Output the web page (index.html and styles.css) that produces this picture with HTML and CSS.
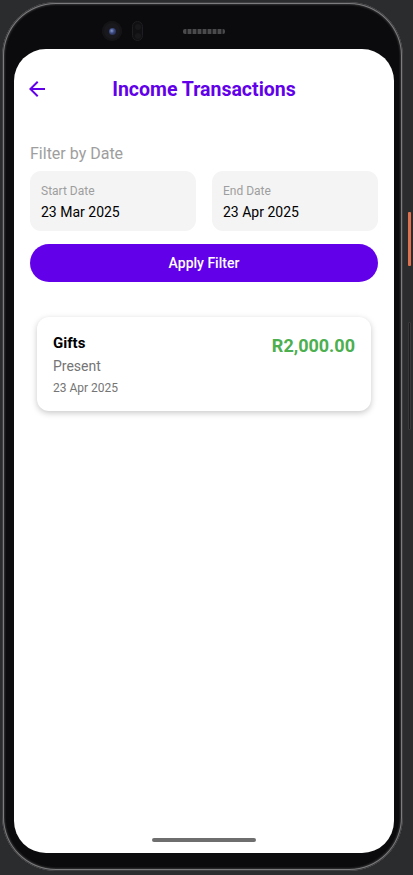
FILE: index.html
```html
<!DOCTYPE html>
<html lang="en">
<head>
<meta charset="utf-8">
<title>Income Transactions</title>
<link rel="stylesheet" href="styles.css">
</head>
<body>
<div class="phone">
  <span class="side-btn power"></span>
  <span class="side-btn volume"></span>
  <div class="bezel-top">
    <span class="camera"><span class="lens"></span></span>
    <span class="sensor"><span class="dot"></span><span class="dot"></span></span>
    <span class="speaker"></span>
  </div>
  <div class="screen">
    <header class="app-bar">
      <svg class="back" width="24" height="24" viewBox="0 0 24 24"><path d="M20 11H7.83l5.59-5.59L12 4l-8 8 8 8 1.41-1.41L7.83 13H20v-2z" fill="#6200ea"/></svg>
      <h1 class="title">Income Transactions</h1>
    </header>
    <main class="content">
      <div class="filter-label">Filter by Date</div>
      <div class="date-row">
        <div class="date-box">
          <div class="date-label">Start Date</div>
          <div class="date-value">23 Mar 2025</div>
        </div>
        <div class="date-box">
          <div class="date-label">End Date</div>
          <div class="date-value">23 Apr 2025</div>
        </div>
      </div>
      <button class="apply">Apply Filter</button>
      <div class="card">
        <div class="card-left">
          <div class="card-title">Gifts</div>
          <div class="card-sub">Present</div>
          <div class="card-date">23 Apr 2025</div>
        </div>
        <div class="amount">R2,000.00</div>
      </div>
    </main>
    <div class="home-indicator"></div>
  </div>
</div>
</body>
</html>
```

FILE: styles.css
```css
* { box-sizing: border-box; }
html, body { margin: 0; padding: 0; }
body {
  background: #2b2c2e;
  width: 413px;
  height: 875px;
  overflow: hidden;
  font-family: Roboto, "Noto Sans", sans-serif;
}
.phone {
  position: relative;
  margin: 2px 0 0 2px;
  width: 401px;
  height: 869px;
  border-radius: 54px;
  background: #0b0b0d;
  box-shadow: inset 0 0 0 1px #3e3e40, inset 0 0 0 2px #7c7c7e, inset 0 0 0 3px #262628, inset 0 0 0 4px #151517;
  padding: 0 9px 18px 12px;
  display: flex;
  flex-direction: column;
}
.side-btn {
  position: absolute;
  left: 406px;
  width: 3px;
  border-radius: 1px;
}
.side-btn.power { top: 210px; height: 54px; background: #e0714f; }
.side-btn.volume { top: 320px; height: 108px; background: #1e1e20; border: 1px solid #3a3a3c; }
.bezel-top {
  height: 47px;
  padding: 11px 0 0 88px;
  display: flex;
  align-items: center;
}
.camera {
  width: 20px; height: 20px; border-radius: 50%;
  background: #19191d;
  display: flex; align-items: center; justify-content: center;
  box-shadow: inset 0 0 0 2px #141417;
}
.lens {
  width: 7px; height: 7px; border-radius: 50%;
  background: radial-gradient(circle at 40% 40%, #8a9ad0 0, #3a4a80 40%, #1a1a28 100%);
}
.sensor {
  margin-left: 10px;
  width: 11px; height: 20px; border-radius: 6px;
  background: #101013;
  border: 1px solid #1e1e22;
  display: flex; flex-direction: column; align-items: center; justify-content: space-around;
}
.sensor .dot { width: 6px; height: 6px; border-radius: 50%; background: #18181b; }
.speaker {
  margin-left: 40px;
  width: 42px; height: 5px; border-radius: 2px;
  background: repeating-linear-gradient(90deg, #4a4a4c 0 3px, #252527 3px 5px);
}
.screen {
  flex: 1;
  background: #fff;
  border-radius: 32px;
  overflow: hidden;
  display: flex;
  flex-direction: column;
}
.app-bar {
  margin-top: 12px;
  height: 56px;
  display: flex;
  align-items: center;
  position: relative;
  padding-left: 11px;
}
.back { display: block; }
.title {
  position: absolute;
  left: 0; right: 0;
  margin: 0;
  text-align: center;
  font-size: 19.5px;
  font-weight: 700;
  color: #6200ea;
  pointer-events: none;
}
.content {
  padding: 27px 16px 0;
  display: flex;
  flex-direction: column;
}
.filter-label {
  font-size: 16px;
  line-height: 19px;
  color: #9e9e9e;
  margin-bottom: 8px;
}
.date-row {
  display: flex;
  gap: 16px;
}
.date-box {
  flex: 1;
  height: 60px;
  background: #f4f4f4;
  border-radius: 11px;
  padding: 13px 11px 0;
}
.date-label {
  font-size: 12px;
  line-height: 14px;
  color: #9e9e9e;
}
.date-value {
  margin-top: 6px;
  font-size: 14px;
  line-height: 17px;
  color: #000;
}
.apply {
  margin-top: 13px;
  height: 38px;
  border: none;
  border-radius: 19px;
  background: #6200ea;
  color: #fff;
  font-family: Roboto, sans-serif;
  font-size: 14px;
  font-weight: 500;
}
.card {
  margin: 35px 7px 0;
  height: 94px;
  border-radius: 12px;
  background: #fff;
  box-shadow: 0 2px 6px rgba(0,0,0,0.22);
  padding: 17px 16px 0;
  display: flex;
  justify-content: space-between;
  align-items: flex-start;
}
.card-title {
  font-size: 15px;
  line-height: 19px;
  font-weight: 700;
  color: #000;
}
.card-sub {
  margin-top: 5px;
  font-size: 14px;
  line-height: 17px;
  color: #757575;
}
.card-date {
  margin-top: 6px;
  font-size: 12px;
  line-height: 14px;
  color: #757575;
}
.amount {
  margin-top: 1px;
  font-size: 18px;
  line-height: 21px;
  font-weight: 700;
  color: #4caf50;
}
.home-indicator {
  margin: auto auto 11px;
  width: 104px;
  height: 4px;
  border-radius: 2px;
  background: #6e6e6e;
}
```
